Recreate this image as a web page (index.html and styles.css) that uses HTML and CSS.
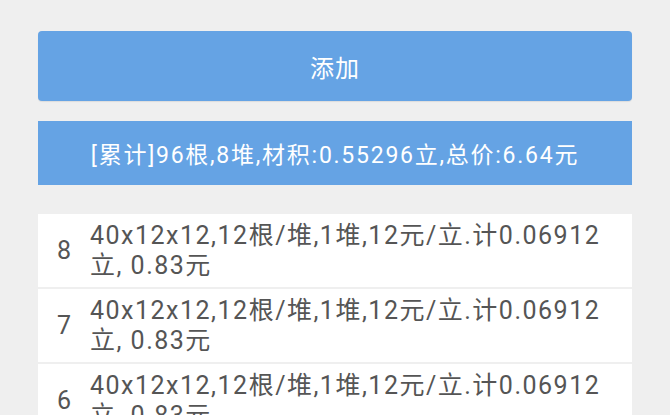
FILE: index.html
```html
<!DOCTYPE html>
<html lang="zh-CN">
<head>
<meta charset="utf-8">
<link rel="stylesheet" href="styles.css">
</head>
<body>
<div class="page">
  <div class="btn-add">添加</div>
  <div class="summary">[累计]96根,8堆,材积:0.55296立,总价:6.64元</div>
  <ul class="list">
    <li class="row"><span class="num">8</span><span class="desc">40x12x12,12根/堆,1堆,12元/立.计0.06912立, 0.83元</span></li>
    <li class="row"><span class="num">7</span><span class="desc">40x12x12,12根/堆,1堆,12元/立.计0.06912立, 0.83元</span></li>
    <li class="row"><span class="num">6</span><span class="desc">40x12x12,12根/堆,1堆,12元/立.计0.06912立, 0.83元</span></li>
  </ul>
</div>
</body>
</html>
```

FILE: styles.css
```css
html, body {
  margin: 0;
  padding: 0;
  background: #efefef;
  font-family: Roboto, "Noto Sans CJK SC", sans-serif;
  overflow: hidden;
}
.page {
  padding: 31px 38px 0 38px;
  display: flex;
  flex-direction: column;
}
.btn-add {
  height: 70px;
  background: #65a3e4;
  border-radius: 4px;
  color: #ffffff;
  font-size: 24px;
  letter-spacing: 1px;
  display: flex;
  align-items: center;
  justify-content: center;
  box-shadow: 0 1px 1px rgba(0,0,0,0.08);
}
.summary {
  margin-top: 20px;
  height: 64px;
  background: #65a3e4;
  color: #ffffff;
  font-size: 23px;
  letter-spacing: 1.75px;
  display: flex;
  align-items: center;
  justify-content: center;
}
.list {
  list-style: none;
  margin: 29px 0 0 0;
  padding: 0;
  display: flex;
  flex-direction: column;
}
.row {
  display: flex;
  align-items: center;
  background: #ffffff;
  height: 73px;
  border-bottom: 2px solid #efefef;
  color: #555555;
  font-size: 25px;
  line-height: 30px;
}
.num {
  width: 52px;
  flex: none;
  text-align: center;
}
.desc {
  flex: 1;
  padding-right: 16px;
  letter-spacing: 1.5px;
}
```
